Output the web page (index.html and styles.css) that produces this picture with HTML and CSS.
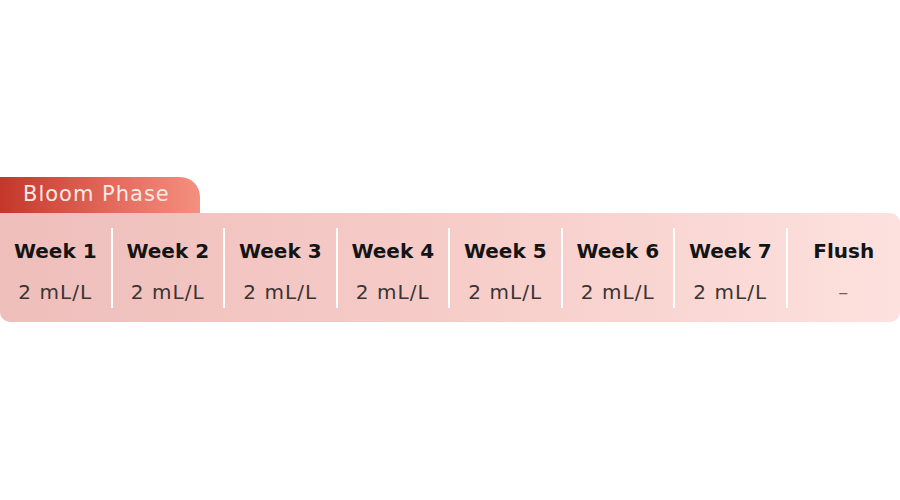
FILE: index.html
```html
<!DOCTYPE html>
<html>
<head>
<meta charset="utf-8">
<link rel="stylesheet" href="styles.css">
</head>
<body>
<div class="page">
  <section class="phase">
    <div class="tab">Bloom Phase</div>
    <div class="card">
      <div class="col"><div class="wk">Week 1</div><div class="dose">2 mL/L</div></div>
      <div class="col"><div class="wk">Week 2</div><div class="dose">2 mL/L</div></div>
      <div class="col"><div class="wk">Week 3</div><div class="dose">2 mL/L</div></div>
      <div class="col"><div class="wk">Week 4</div><div class="dose">2 mL/L</div></div>
      <div class="col"><div class="wk">Week 5</div><div class="dose">2 mL/L</div></div>
      <div class="col"><div class="wk">Week 6</div><div class="dose">2 mL/L</div></div>
      <div class="col"><div class="wk">Week 7</div><div class="dose">2 mL/L</div></div>
      <div class="col"><div class="wk">Flush</div><div class="dose dash">–</div></div>
    </div>
  </section>
</div>
</body>
</html>
```
FILE: styles.css
```css
html, body {
  margin: 0;
  padding: 0;
  background: #ffffff;
}
.page {
  height: 500px;
  display: flex;
  flex-direction: column;
  justify-content: center;
  font-family: "DejaVu Sans", "Noto Sans", sans-serif;
}
.phase {
  display: flex;
  flex-direction: column;
  align-items: flex-start;
  margin-top: -1px;
}
.tab {
  width: 200px;
  height: 36px;
  box-sizing: border-box;
  padding-left: 23px;
  padding-bottom: 3px;
  display: flex;
  align-items: center;
  font-size: 21px;
  letter-spacing: 1px;
  color: #fde8e4;
  background: linear-gradient(90deg, #c4372a 0%, #e2695b 55%, #f4907f 100%);
  border-radius: 0 20px 0 0;
}
.card {
  width: 900px;
  box-sizing: border-box;
  height: 109px;
  padding: 15px 0 14px;
  display: grid;
  grid-template-columns: repeat(8, 1fr);
  background: linear-gradient(90deg, #eebebb 0%, #f6ccc8 50%, #fde1de 100%);
  border-radius: 0 10px 10px 10px;
}
.col {
  display: flex;
  flex-direction: column;
  align-items: center;
  justify-content: center;
  gap: 17px;
  padding-top: 6px;
  border-right: 2px solid #ffffff;
}
.col:last-child {
  border-right: none;
}
.wk {
  font-weight: 700;
  font-size: 20px;
  color: #141414;
}
.dose {
  font-size: 20px;
  letter-spacing: 1.1px;
  color: #3a3433;
}
.dash {
  color: #6b5f5d;
}
```
